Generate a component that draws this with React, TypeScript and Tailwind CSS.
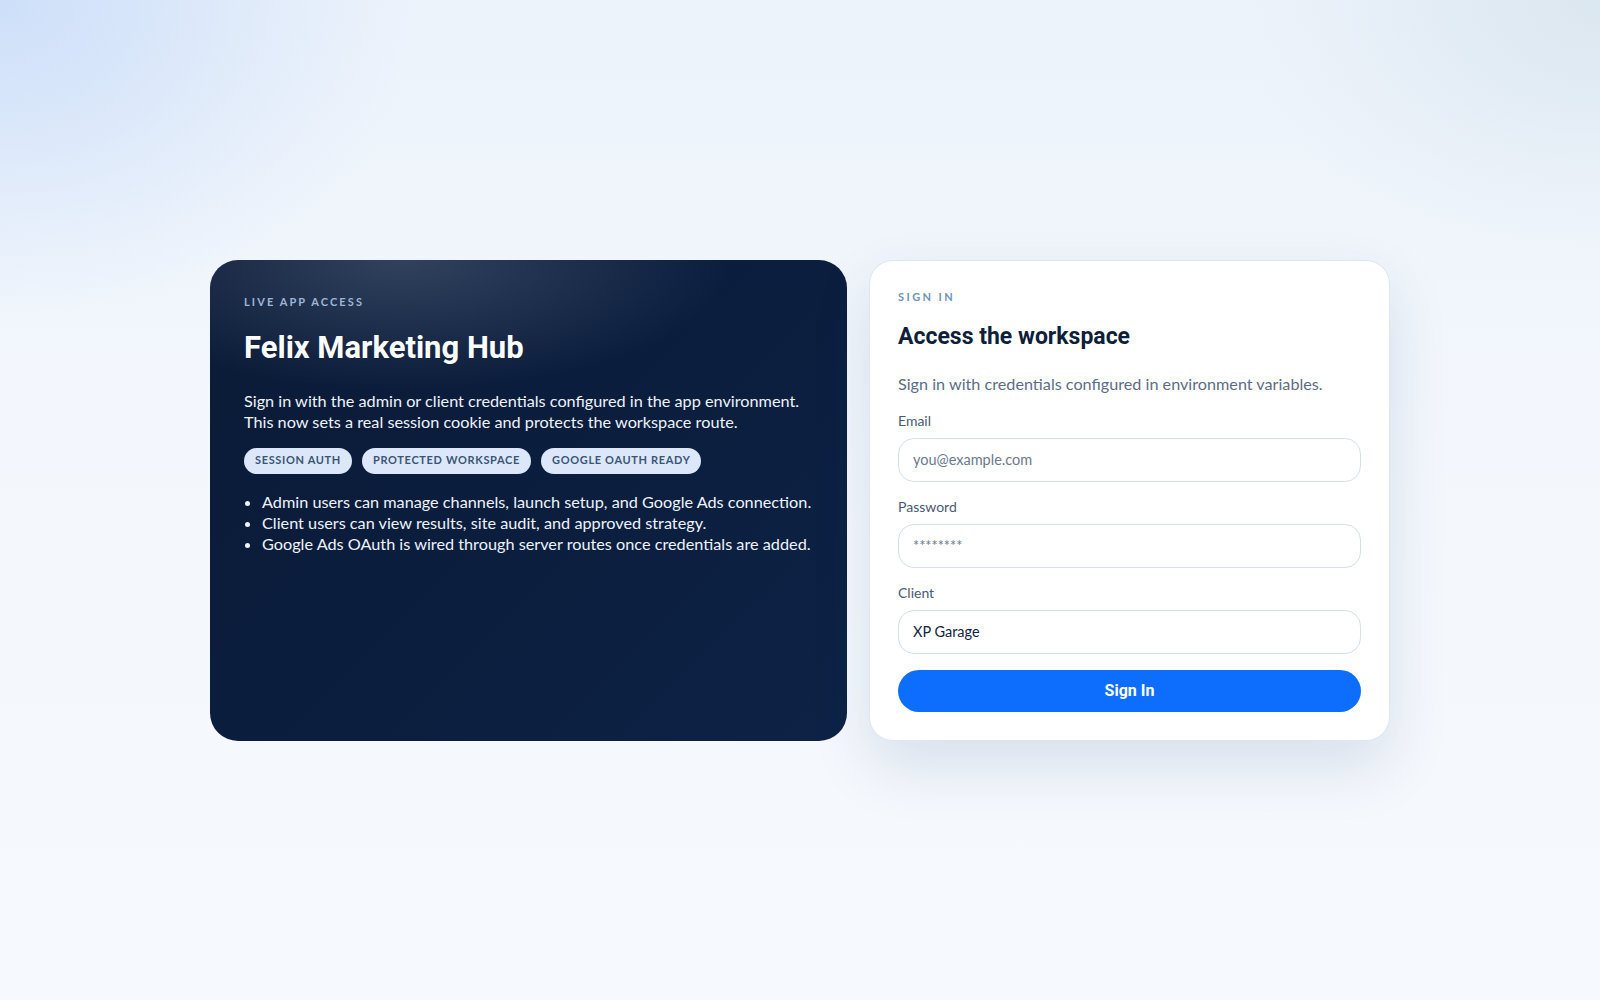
const HEAD = "font-['Roboto','Noto_Sans',sans-serif]"
const BODY = "font-['Lato','Noto_Sans',sans-serif]"

const CHIPS = ['Session auth', 'Protected workspace', 'Google OAuth ready']

const NOTES = [
  'Admin users can manage channels, launch setup, and Google Ads connection.',
  'Client users can view results, site audit, and approved strategy.',
  'Google Ads OAuth is wired through server routes once credentials are added.',
]

function Field({ label, placeholder, value, type = 'text' }: { label: string, placeholder?: string, value?: string, type?: string }) {
  return (
    <label className="flex flex-col gap-2">
      <span className={`${BODY} text-[14px] leading-[18px] text-[#4b5a70]`}>{label}</span>
      <input
        type={type}
        placeholder={placeholder}
        defaultValue={value}
        className={`${BODY} h-[44px] w-full rounded-[16px] border border-[#d3e0ee] bg-white px-[14px] text-[14.5px] text-[#13233f] outline-none placeholder:text-[#6b7a90]`}
      />
    </label>
  )
}

export default function App() {
  return (
    <div className="flex min-h-screen w-full items-center justify-center bg-[radial-gradient(420px_320px_at_0%_0%,#cddff9_0%,transparent_100%),radial-gradient(360px_260px_at_100%_0%,#dbe7f0_0%,transparent_100%),linear-gradient(180deg,#edf3fb_0%,#f4f8fd_55%,#f6f9fe_100%)]">
      <div className="grid w-full max-w-[1180px] grid-cols-[637px_521px] gap-[22px]">
        {/* 左侧说明卡片 */}
        <section className="rounded-[28px] bg-[radial-gradient(330px_130px_at_30%_0%,rgba(170,185,210,0.24)_0%,transparent_100%),linear-gradient(135deg,#0b1b37_0%,#0b1e3e_55%,#0d2246_100%)] p-[34px] text-white">
          <p className={`${BODY} text-[11px] font-bold uppercase leading-4 tracking-[0.19em] text-[#9db6d8]`}>
            Live app access
          </p>
          <h1 className={`${HEAD} mt-[18px] text-[31px] font-bold leading-10 text-white`}>
            Felix Marketing Hub
          </h1>
          <p className={`${BODY} mt-[22px] text-[16.25px] leading-[21.5px] text-[#eef3fb]`}>
            Sign in with the admin or client credentials configured in the app environment.
            <br />
            This now sets a real session cookie and protects the workspace route.
          </p>
          <div className="mt-[15px] flex gap-[10px]">
            {CHIPS.map(chip => (
              <span
                key={chip}
                className={`${BODY} inline-flex h-[26px] items-center rounded-full bg-[#dce8fa] px-[11px] text-[11px] font-bold uppercase tracking-[0.06em] text-[#3a5476]`}
              >
                {chip}
              </span>
            ))}
          </div>
          <ul className={`${BODY} mt-[17px] list-disc pl-[18px] text-[16.25px] leading-[21px] text-[#eef3fb]`}>
            {NOTES.map(note => (
              <li key={note}>{note}</li>
            ))}
          </ul>
        </section>

        {/* 右侧登录表单 */}
        <section className="rounded-[24px] border border-[#dde6f1] bg-white p-[28px] shadow-[0_26px_60px_rgba(30,60,110,0.13)]">
          <p className={`${BODY} text-[11px] font-bold uppercase leading-4 tracking-[0.22em] text-[#7093b9]`}>
            Sign in
          </p>
          <h2 className={`${HEAD} mt-[18px] text-[23px] font-bold leading-7 text-[#0f1f3b]`}>
            Access the workspace
          </h2>
          <p className={`${BODY} mt-[22px] text-[16.2px] leading-[22px] text-[#5d6d85]`}>
            Sign in with credentials configured in environment variables.
          </p>
          <form className="mt-[17px] flex flex-col gap-4" onSubmit={e => e.preventDefault()}>
            <Field label="Email" placeholder="you@example.com" />
            <Field label="Password" placeholder="********" type="password" />
            <Field label="Client" value="XP Garage" />
            <button
              type="submit"
              className={`${HEAD} h-[42px] w-full rounded-full bg-[#0d6efd] text-[16px] font-bold text-white`}
            >
              Sign In
            </button>
          </form>
        </section>
      </div>
    </div>
  )
}
